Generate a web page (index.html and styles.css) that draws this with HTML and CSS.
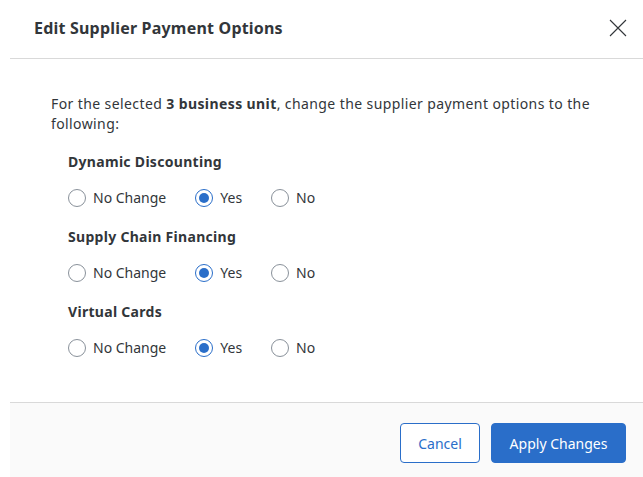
FILE: index.html
```html
<!DOCTYPE html>
<html lang="en">
<head>
<meta charset="utf-8">
<title>Edit Supplier Payment Options</title>
<link rel="stylesheet" href="styles.css">
</head>
<body>
<div class="dialog">
  <header class="dialog-header">
    <h1 class="dialog-title">Edit Supplier Payment Options</h1>
    <button class="close-btn" aria-label="Close">
      <svg width="18" height="18" viewBox="0 0 18 18"><path d="M1 1 L17 17 M17 1 L1 17" stroke="#32363a" stroke-width="1.1" fill="none"/></svg>
    </button>
  </header>
  <main class="dialog-body">
    <p class="intro">For the selected <b>3 business unit</b>, change the supplier payment options to the following:</p>
    <div class="groups">
      <fieldset class="group">
        <div class="group-label">Dynamic Discounting</div>
        <div class="options">
          <label class="option"><input type="radio" name="dd" class="radio"><span>No Change</span></label>
          <label class="option"><input type="radio" name="dd" class="radio" checked><span>Yes</span></label>
          <label class="option"><input type="radio" name="dd" class="radio"><span>No</span></label>
        </div>
      </fieldset>
      <fieldset class="group">
        <div class="group-label">Supply Chain Financing</div>
        <div class="options">
          <label class="option"><input type="radio" name="scf" class="radio"><span>No Change</span></label>
          <label class="option"><input type="radio" name="scf" class="radio" checked><span>Yes</span></label>
          <label class="option"><input type="radio" name="scf" class="radio"><span>No</span></label>
        </div>
      </fieldset>
      <fieldset class="group">
        <div class="group-label">Virtual Cards</div>
        <div class="options">
          <label class="option"><input type="radio" name="vc" class="radio"><span>No Change</span></label>
          <label class="option"><input type="radio" name="vc" class="radio" checked><span>Yes</span></label>
          <label class="option"><input type="radio" name="vc" class="radio"><span>No</span></label>
        </div>
      </fieldset>
    </div>
  </main>
  <footer class="dialog-footer">
    <button class="btn btn-secondary">Cancel</button>
    <button class="btn btn-primary">Apply Changes</button>
  </footer>
</div>
</body>
</html>
```
FILE: styles.css
```css
* { box-sizing: border-box; }
html, body { margin: 0; padding: 0; background: #ffffff; }
body {
  font-family: "Noto Sans", "Open Sans", "Liberation Sans", sans-serif;
  color: #32363a;
  font-size: 14px;
  width: 643px;
  height: 477px;
  overflow: hidden;
}
.dialog {
  margin-left: 10px;
  width: 633px;
  height: 477px;
  display: flex;
  flex-direction: column;
  background: #ffffff;
}
.dialog-header {
  height: 59px;
  border-bottom: 1px solid #d9d9d9;
  display: flex;
  align-items: center;
  justify-content: space-between;
  padding: 0 16px 2px 24px;
}
.dialog-title {
  margin: 0;
  font-size: 16px;
  font-weight: 700;
  line-height: 20px;
  letter-spacing: 0.2px;
  color: #32363a;
}
.close-btn {
  border: 0;
  background: none;
  padding: 0;
  width: 18px;
  height: 18px;
  display: flex;
  cursor: pointer;
}
.dialog-body {
  flex: 1;
  padding: 35px 20px 0 41px;
}
.intro {
  margin: 0;
  line-height: 20px;
  letter-spacing: 0.4px;
}
.intro b { font-weight: 700; }
.groups {
  margin-top: 18px;
  padding-left: 17px;
  display: flex;
  flex-direction: column;
  gap: 19px;
}
.group {
  border: 0;
  margin: 0;
  padding: 0;
  display: flex;
  flex-direction: column;
  gap: 16px;
}
.group-label {
  font-weight: 700;
  line-height: 20px;
  letter-spacing: 0.3px;
}
.options {
  display: flex;
  gap: 29px;
  height: 20px;
  align-items: center;
}
.option {
  display: flex;
  align-items: center;
  gap: 7px;
  line-height: 20px;
}
.radio {
  appearance: none;
  -webkit-appearance: none;
  margin: 0;
  width: 18px;
  height: 18px;
  border: 1px solid #89919a;
  border-radius: 50%;
  background: #fff;
  display: grid;
  place-items: center;
}
.radio:checked {
  border-color: #2a6ec9;
}
.radio:checked::after {
  content: "";
  width: 10px;
  height: 10px;
  border-radius: 50%;
  background: #2a6ec9;
}
.dialog-footer {
  height: 75px;
  border-top: 1px solid #d9d9d9;
  background: #fafafa;
  display: flex;
  justify-content: flex-end;
  align-items: flex-start;
  gap: 11px;
  padding: 20px 17px 0 0;
}
.btn {
  height: 40px;
  border-radius: 4px;
  font-family: inherit;
  font-size: 14px;
  padding: 0 16px;
  cursor: pointer;
}
.btn-secondary {
  width: 80px;
  background: #ffffff;
  border: 1px solid #2a6ec9;
  color: #2a6ec9;
}
.btn-primary {
  width: 135px;
  background: #2a6ec9;
  border: 1px solid #2a6ec9;
  color: #ffffff;
}
```
